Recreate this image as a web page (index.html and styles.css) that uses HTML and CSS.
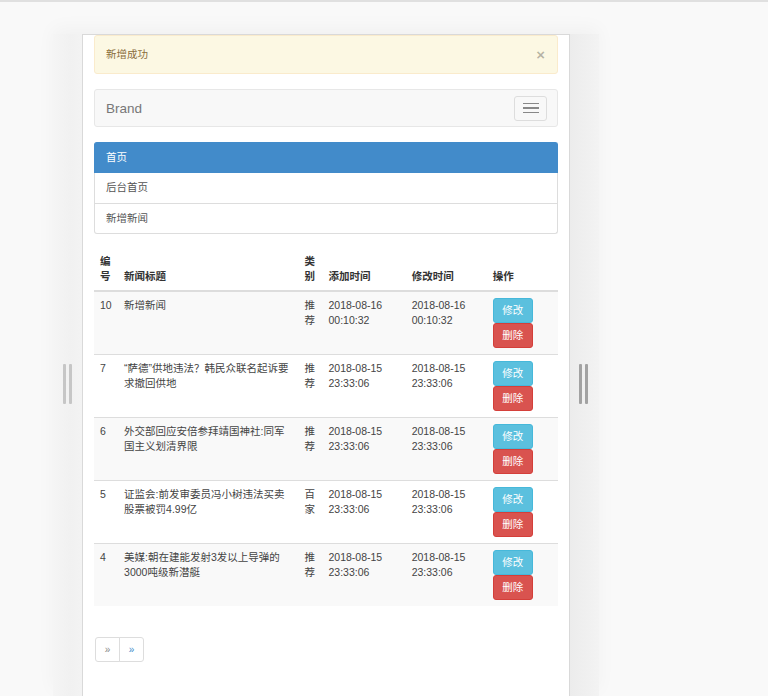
FILE: index.html
```html
<!DOCTYPE html>
<html lang="zh-CN">
<head>
<meta charset="utf-8">
<title>新闻管理</title>
<link rel="stylesheet" href="styles.css">
</head>
<body>
<div class="frame">
  <div class="strip strip-left"><span class="grip"></span><span class="grip"></span></div>
  <div class="device">
    <div class="alert"><span>新增成功</span><span class="close">×</span></div>
    <nav class="navbar">
      <span class="brand">Brand</span>
      <button class="toggle" type="button"><span class="bar"></span><span class="bar"></span><span class="bar"></span></button>
    </nav>
    <div class="panel">
      <div class="panel-heading">首页</div>
      <div class="list">
        <div class="list-item">后台首页</div>
        <div class="list-item">新增新闻</div>
      </div>
    </div>
    <table class="news">
      <colgroup>
        <col class="c-id"><col class="c-title"><col class="c-type"><col class="c-add"><col class="c-mod"><col class="c-op">
      </colgroup>
      <thead>
        <tr><th>编号</th><th>新闻标题</th><th>类别</th><th>添加时间</th><th>修改时间</th><th>操作</th></tr>
      </thead>
      <tbody>
        <tr><td>10</td><td>新增新闻</td><td>推荐</td><td>2018-08-16 00:10:32</td><td>2018-08-16 00:10:32</td><td><a class="btn btn-info">修改</a><a class="btn btn-danger">删除</a></td></tr>
        <tr><td>7</td><td>“萨德”供地违法？韩民众联名起诉要求撤回供地</td><td>推荐</td><td>2018-08-15 23:33:06</td><td>2018-08-15 23:33:06</td><td><a class="btn btn-info">修改</a><a class="btn btn-danger">删除</a></td></tr>
        <tr><td>6</td><td>外交部回应安倍参拜靖国神社:同军国主义划清界限</td><td>推荐</td><td>2018-08-15 23:33:06</td><td>2018-08-15 23:33:06</td><td><a class="btn btn-info">修改</a><a class="btn btn-danger">删除</a></td></tr>
        <tr><td>5</td><td>证监会:前发审委员冯小树违法买卖股票被罚4.99亿</td><td>百家</td><td>2018-08-15 23:33:06</td><td>2018-08-15 23:33:06</td><td><a class="btn btn-info">修改</a><a class="btn btn-danger">删除</a></td></tr>
        <tr><td>4</td><td>美媒:朝在建能发射3发以上导弹的3000吨级新潜艇</td><td>推荐</td><td>2018-08-15 23:33:06</td><td>2018-08-15 23:33:06</td><td><a class="btn btn-info">修改</a><a class="btn btn-danger">删除</a></td></tr>
      </tbody>
    </table>
    <ul class="pagination">
      <li class="page muted">»</li>
      <li class="page link">»</li>
    </ul>
  </div>
  <div class="strip strip-right"><span class="grip"></span><span class="grip"></span></div>
</div>
</body>
</html>
```
FILE: styles.css
```css
html, body {
  margin: 0;
  height: 100%;
  overflow: hidden;
}
body {
  box-sizing: border-box;
  background: #f9f9f9;
  border-top: 2px solid #e0e0e0;
  font-family: "Liberation Sans", "Noto Sans CJK SC", sans-serif;
  font-size: 10.5px;
  line-height: 15px;
  color: #333;
}
.frame {
  display: flex;
  margin: 32px 0 0 53px;
  height: calc(100vh - 34px);
  width: 546px;
  box-shadow: 0 -6px 18px rgba(0, 0, 0, 0.035);
}
.strip {
  width: 29px;
  flex: none;
  display: flex;
  gap: 3px;
  padding-top: 330px;
  box-sizing: border-box;
}
.strip-left {
  background: linear-gradient(to right, #f5f5f5, #f1f1f1 60%, #f3f3f3);
  padding-left: 10px;
}
.strip-right {
  background: linear-gradient(to right, #ececec, #f0f0f0 60%, #f3f3f3);
  padding-left: 9px;
}
.grip {
  width: 3px;
  height: 40px;
  border-radius: 1px;
  background: #c6c6c6;
}
.strip-right .grip {
  background: #a2a2a2;
}
.device {
  width: 488px;
  flex: none;
  box-sizing: border-box;
  background: #fff;
  border: 1px solid #d9d9d9;
  border-bottom: none;
  padding: 0 11px;
  overflow: hidden;
}
.alert {
  display: flex;
  justify-content: space-between;
  align-items: center;
  background: #fcf8e3;
  border: 1px solid #faebcc;
  border-radius: 3px;
  color: #8a6d3b;
  padding: 11px 12px 11px 11px;
  margin-bottom: 15px;
}
.close {
  font-size: 15px;
  font-weight: bold;
  color: rgba(0, 0, 0, 0.28);
  line-height: 15px;
}
.navbar {
  height: 38px;
  box-sizing: border-box;
  display: flex;
  align-items: center;
  justify-content: space-between;
  background: #f8f8f8;
  border: 1px solid #e7e7e7;
  border-radius: 3px;
  padding: 0 10px 0 11px;
  margin-bottom: 15px;
}
.brand {
  font-size: 13.5px;
  color: #777;
}
.toggle {
  width: 33px;
  height: 25px;
  box-sizing: border-box;
  border: 1px solid #ddd;
  border-radius: 3px;
  background: transparent;
  padding: 0;
  display: flex;
  flex-direction: column;
  align-items: center;
  justify-content: center;
  gap: 3px;
}
.bar {
  display: block;
  width: 16px;
  height: 1.5px;
  background: #888;
}
.panel {
  margin-bottom: 14px;
}
.panel-heading {
  background: #428bca;
  color: #fff;
  border: 1px solid #428bca;
  border-bottom: none;
  border-radius: 3px 3px 0 0;
  padding: 7px 11px 8px;
}
.list {
  border: 1px solid #ddd;
  border-top: none;
  border-radius: 0 0 3px 3px;
}
.list-item {
  color: #555;
  padding: 7px 11px;
}
.list-item:first-child {
  padding-bottom: 8px;
}
.list-item + .list-item {
  border-top: 1px solid #ddd;
}
.news {
  width: 100%;
  border-collapse: collapse;
  table-layout: fixed;
  margin-bottom: 15px;
}
.c-id { width: 24px; }
.c-title { width: 180px; }
.c-type { width: 24px; }
.c-add { width: 83px; }
.c-mod { width: 81px; }
.c-op { width: 71px; }
.news th {
  text-align: left;
  vertical-align: bottom;
  padding: 6px;
  font-weight: bold;
  border-bottom: 2px solid #ddd;
}
.news td {
  vertical-align: top;
  padding: 6px;
  border-top: 1px solid #ddd;
  color: #444;
}
.news tbody tr:nth-child(odd) {
  background: #f9f9f9;
}
.btn {
  display: block;
  width: 40px;
  height: 25px;
  box-sizing: border-box;
  border: 1px solid;
  border-radius: 3px;
  color: #fff;
  text-align: center;
  line-height: 23px;
}
.news td .btn {
  color: #fff;
}
.btn-info {
  background: #5bc0de;
  border-color: #46b8da;
}
.btn-danger {
  background: #d9534f;
  border-color: #d43f3a;
}
.pagination {
  display: flex;
  list-style: none;
  margin: 31px 0 15px;
  padding: 0 0 0 1px;
}
.page {
  width: 25px;
  height: 25px;
  box-sizing: border-box;
  border: 1px solid #ddd;
  display: flex;
  align-items: center;
  justify-content: center;
  font-size: 10px;
}
.page + .page {
  margin-left: -1px;
}
.page:first-child {
  border-radius: 3px 0 0 3px;
}
.page:last-child {
  border-radius: 0 3px 3px 0;
}
.muted {
  color: #888;
}
.link {
  color: #428bca;
}
```
